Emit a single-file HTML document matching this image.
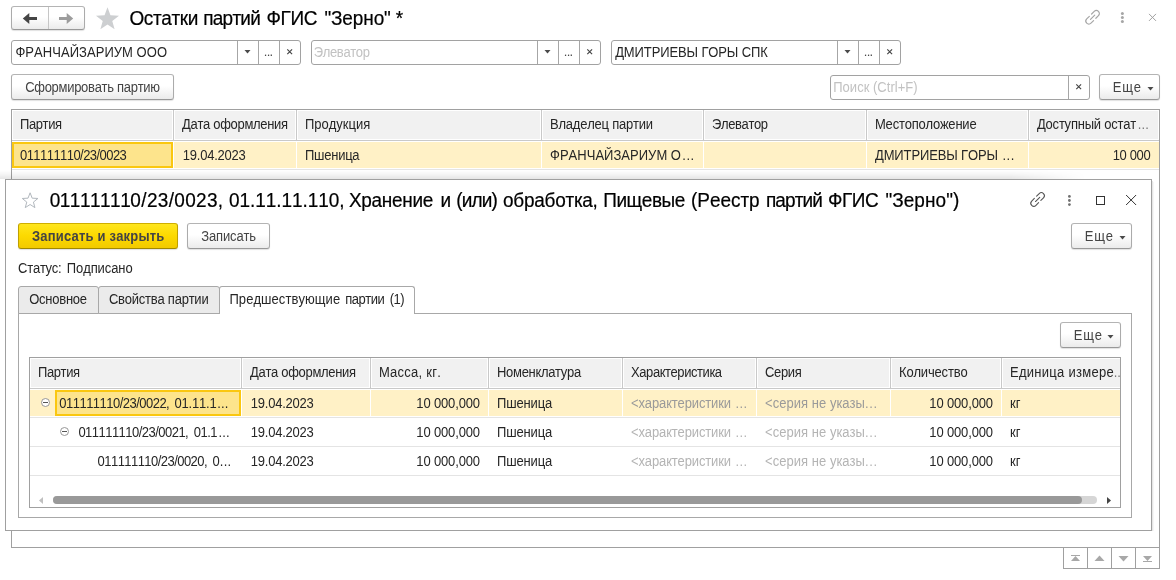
<!DOCTYPE html>
<html lang="ru">
<head>
<meta charset="utf-8">
<title>Остатки партий ФГИС "Зерно"</title>
<style>
*{box-sizing:border-box;margin:0;padding:0}
html,body{width:1176px;height:580px;overflow:hidden;background:#fff}
body{position:relative;font-family:"Liberation Sans",Arial,sans-serif;font-size:13px;color:#262626;line-height:15px;font-kerning:none}
.abs,.abs>*{position:absolute}
.abs{left:0;top:0;width:1176px;height:580px}
.t{white-space:nowrap;line-height:15px;height:15px}
.btn{border:1px solid #ababab;border-top-color:#b4b4b4;border-bottom-color:#989898;border-radius:3px;background:linear-gradient(#fff 0%,#fff 45%,#ebebeb 100%);box-shadow:0 1px 1px rgba(0,0,0,.12)}
.fld{border:1px solid #a2a2a2;border-radius:3px;background:#fff}
svg{overflow:visible}
</style>
</head>
<body>
<div class="abs" id="main">
<div class="btn" style="left:11px;top:6px;width:74px;height:24px;"></div>
<div style="left:48px;top:7px;width:1px;height:22px;background:#c6c6c6;"></div>
<svg style="left:11px;top:6px" width="74" height="24" viewBox="0 0 74 24"><path d="M11.8 12.5 L18.3 7 V11 H26 V14 H18.3 V18 Z" fill="#454545"/><path d="M62.2 12.5 L55.7 7 V11 H48 V14 H55.7 V18 Z" fill="#9c9c9c"/></svg>
<svg style="left:0;top:0" width="1" height="1"><path d="M107.50 7.30 L110.44 15.35 L119.01 15.66 L112.26 20.95 L114.61 29.19 L107.50 24.40 L100.39 29.19 L102.74 20.95 L95.99 15.66 L104.56 15.35 Z" fill="#cdcfd1"/></svg>
<div class="t" style="left:129.40px;top:8px;font-size:19px;line-height:22px;height:22px;-webkit-text-stroke:0.2px #000;letter-spacing:-0.385px;color:#000;transform:scaleY(1.03);transform-origin:0 17px;">Остатки</div>
<div class="t" style="left:203.18px;top:8px;font-size:19px;line-height:22px;height:22px;-webkit-text-stroke:0.2px #000;letter-spacing:-0.733px;color:#000;transform:scaleY(1.03);transform-origin:0 17px;">партий</div>
<div class="t" style="left:266.51px;top:8px;font-size:19px;line-height:22px;height:22px;-webkit-text-stroke:0.2px #000;letter-spacing:-0.381px;color:#000;transform:scaleY(1.03);transform-origin:0 17px;">ФГИС</div>
<div class="t" style="left:324.39px;top:8px;font-size:19px;line-height:22px;height:22px;-webkit-text-stroke:0.2px #000;letter-spacing:-0.116px;color:#000;transform:scaleY(1.03);transform-origin:0 17px;">"Зерно"</div>
<div class="t" style="left:395.69px;top:8px;font-size:19px;line-height:22px;height:22px;-webkit-text-stroke:0.2px #000;color:#000;transform:scaleY(1.03);transform-origin:0 17px;">*</div>
<svg style="left:0;top:0" width="1" height="1"><g transform="translate(1092.6 17.3) rotate(-45)" fill="none" stroke="#a6a6a6" stroke-width="1.2" stroke-linecap="round"><path d="M-1.6 -3 H-5.3 a3 3 0 0 0 0 6 H-1.6"/><path d="M1.6 -3 H5.3 a3 3 0 0 1 0 6 H1.6"/><path d="M-3 0 H3"/></g></svg>
<svg style="left:0;top:0" width="1" height="1" fill="#a6a6a6"><circle cx="1122.4" cy="13.6" r="1.5"/><circle cx="1122.4" cy="17.6" r="1.5"/><circle cx="1122.4" cy="21.6" r="1.5"/></svg>
<svg style="left:0;top:0" width="1" height="1"><path d="M1149 13.9 L1156 20.9 M1156 13.9 L1149 20.9" stroke="#a0a0a0" stroke-width="1" fill="none"/></svg>
<div class="fld" style="left:11px;top:40px;width:290px;height:25px;"></div>
<div style="left:279px;top:41px;width:1px;height:23px;background:#a6a6a6;"></div>
<div style="left:258px;top:41px;width:1px;height:23px;background:#a6a6a6;"></div>
<div style="left:237px;top:41px;width:1px;height:23px;background:#a6a6a6;"></div>
<div class="t" style="left:15.45px;top:45px;letter-spacing:0.047px;color:#262626;transform:scaleY(1.07);transform-origin:0 12px;">ФРАНЧАЙЗАРИУМ ООО</div>
<svg style="left:244px;top:49.5px" width="7" height="4" viewBox="0 0 7 4"><path d="M0.5 0 H6.5 L3.5 3.5 Z" fill="#4a4a4a"/></svg>
<div class="t" style="left:263.81px;top:44px;letter-spacing:-0.731px;color:#4a4a4a;transform:scaleY(1.001);transform-origin:0 12px;">...</div>
<svg style="left:286.8px;top:48.7px" width="5.4" height="5.4" viewBox="0 0 5.4 5.4"><path d="M0.3 0.3 L5.1 5.1 M5.1 0.3 L0.3 5.1" stroke="#444" stroke-width="1.15" fill="none"/></svg>
<div class="fld" style="left:311px;top:40px;width:290px;height:25px;"></div>
<div style="left:579px;top:41px;width:1px;height:23px;background:#a6a6a6;"></div>
<div style="left:558px;top:41px;width:1px;height:23px;background:#a6a6a6;"></div>
<div style="left:537px;top:41px;width:1px;height:23px;background:#a6a6a6;"></div>
<div class="t" style="left:313.83px;top:45px;letter-spacing:-0.378px;color:#c2c2c2;transform:scaleY(1.07);transform-origin:0 12px;">Элеватор</div>
<svg style="left:544px;top:49.5px" width="7" height="4" viewBox="0 0 7 4"><path d="M0.5 0 H6.5 L3.5 3.5 Z" fill="#4a4a4a"/></svg>
<div class="t" style="left:563.81px;top:44px;letter-spacing:-0.731px;color:#4a4a4a;transform:scaleY(1.001);transform-origin:0 12px;">...</div>
<svg style="left:586.8px;top:48.7px" width="5.4" height="5.4" viewBox="0 0 5.4 5.4"><path d="M0.3 0.3 L5.1 5.1 M5.1 0.3 L0.3 5.1" stroke="#444" stroke-width="1.15" fill="none"/></svg>
<div class="fld" style="left:611px;top:40px;width:290px;height:25px;"></div>
<div style="left:879px;top:41px;width:1px;height:23px;background:#a6a6a6;"></div>
<div style="left:858px;top:41px;width:1px;height:23px;background:#a6a6a6;"></div>
<div style="left:837px;top:41px;width:1px;height:23px;background:#a6a6a6;"></div>
<div class="t" style="left:615.20px;top:45px;letter-spacing:-0.119px;color:#262626;transform:scaleY(1.07);transform-origin:0 12px;">ДМИТРИЕВЫ ГОРЫ СПК</div>
<svg style="left:844px;top:49.5px" width="7" height="4" viewBox="0 0 7 4"><path d="M0.5 0 H6.5 L3.5 3.5 Z" fill="#4a4a4a"/></svg>
<div class="t" style="left:863.81px;top:44px;letter-spacing:-0.731px;color:#4a4a4a;transform:scaleY(1.001);transform-origin:0 12px;">...</div>
<svg style="left:886.8px;top:48.7px" width="5.4" height="5.4" viewBox="0 0 5.4 5.4"><path d="M0.3 0.3 L5.1 5.1 M5.1 0.3 L0.3 5.1" stroke="#444" stroke-width="1.15" fill="none"/></svg>
<div class="btn" style="left:11px;top:74px;width:163px;height:26px;"></div>
<div class="t" style="left:25.14px;top:80px;letter-spacing:-0.288px;color:#444;transform:scaleY(1.07);transform-origin:0 12px;">Сформировать партию</div>
<div class="fld" style="left:830px;top:75px;width:260px;height:25px;"></div>
<div style="left:1068px;top:76px;width:1px;height:23px;background:#a6a6a6;"></div>
<div class="t" style="left:833.25px;top:80px;letter-spacing:0.021px;color:#c2c2c2;transform:scaleY(1.07);transform-origin:0 12px;">Поиск (Ctrl+F)</div>
<svg style="left:1075.8px;top:83.8px" width="5.4" height="5.4" viewBox="0 0 5.4 5.4"><path d="M0.3 0.3 L5.1 5.1 M5.1 0.3 L0.3 5.1" stroke="#444" stroke-width="1.15" fill="none"/></svg>
<div class="btn" style="left:1099px;top:74px;width:61px;height:26px;"></div>
<div class="t" style="left:1112.63px;top:80px;letter-spacing:0.849px;color:#444;transform:scaleY(1.07);transform-origin:0 12px;">Еще</div>
<svg style="left:1146.5px;top:86.6px" width="7" height="4" viewBox="0 0 7 4"><path d="M0.5 0 H6.5 L3.5 3.5 Z" fill="#4a4a4a"/></svg>
<div style="left:11px;top:109px;width:1149px;height:439px;background:#fff;border:1px solid #a0a0a0;"></div>
<div style="left:13px;top:111px;width:159px;height:28px;background:#f1f1f1;"></div>
<div style="left:175px;top:111px;width:120px;height:28px;background:#f1f1f1;"></div>
<div style="left:298px;top:111px;width:242px;height:28px;background:#f1f1f1;"></div>
<div style="left:543px;top:111px;width:159px;height:28px;background:#f1f1f1;"></div>
<div style="left:705px;top:111px;width:160px;height:28px;background:#f1f1f1;"></div>
<div style="left:868px;top:111px;width:159px;height:28px;background:#f1f1f1;"></div>
<div style="left:1030px;top:111px;width:128px;height:28px;background:#f1f1f1;"></div>
<div style="left:173px;top:110px;width:1px;height:30px;background:#c9c9c9;"></div>
<div style="left:296px;top:110px;width:1px;height:30px;background:#c9c9c9;"></div>
<div style="left:541px;top:110px;width:1px;height:30px;background:#c9c9c9;"></div>
<div style="left:703px;top:110px;width:1px;height:30px;background:#c9c9c9;"></div>
<div style="left:866px;top:110px;width:1px;height:30px;background:#c9c9c9;"></div>
<div style="left:1028px;top:110px;width:1px;height:30px;background:#c9c9c9;"></div>
<div style="left:12px;top:140px;width:1147px;height:1px;background:#c9c9c9;"></div>
<div style="left:12px;top:141px;width:1147px;height:28px;background:#fff;"></div>
<div style="left:12px;top:142px;width:161px;height:26px;background:#fff1c6;"></div>
<div style="left:174px;top:142px;width:122px;height:26px;background:#fff1c6;"></div>
<div style="left:297px;top:142px;width:244px;height:26px;background:#fff1c6;"></div>
<div style="left:542px;top:142px;width:161px;height:26px;background:#fff1c6;"></div>
<div style="left:704px;top:142px;width:162px;height:26px;background:#fff1c6;"></div>
<div style="left:867px;top:142px;width:161px;height:26px;background:#fff1c6;"></div>
<div style="left:1029px;top:142px;width:130px;height:26px;background:#fff1c6;"></div>
<div style="left:12px;top:142px;width:161px;height:26px;background:#fde48c;border:2px solid #fac710;"></div>
<div style="left:12px;top:169px;width:1147px;height:1px;background:#e4e4e4;"></div>
<div class="t" style="left:20.00px;top:117px;letter-spacing:-0.402px;transform:scaleY(1.07);transform-origin:0 12px;">Партия</div>
<div class="t" style="left:182.00px;top:117px;letter-spacing:-0.314px;transform:scaleY(1.07);transform-origin:0 12px;">Дата оформления</div>
<div class="t" style="left:305.00px;top:117px;letter-spacing:-0.009px;transform:scaleY(1.07);transform-origin:0 12px;">Продукция</div>
<div class="t" style="left:550.00px;top:117px;letter-spacing:-0.221px;transform:scaleY(1.07);transform-origin:0 12px;">Владелец партии</div>
<div class="t" style="left:712.00px;top:117px;letter-spacing:-0.373px;transform:scaleY(1.07);transform-origin:0 12px;">Элеватор</div>
<div class="t" style="left:875.00px;top:117px;letter-spacing:-0.215px;transform:scaleY(1.07);transform-origin:0 12px;">Местоположение</div>
<div class="t" style="left:1037.00px;top:117px;letter-spacing:-0.216px;transform:scaleY(1.07);transform-origin:0 12px;">Доступный остат</div>
<div class="t" style="left:1137.81px;top:117px;letter-spacing:0.144px;color:#777;transform:scaleY(1.07);transform-origin:0 12px;">...</div>
<div class="t" style="left:20.00px;top:148px;letter-spacing:-0.553px;transform:scaleY(1.07);transform-origin:0 12px;">011111110/23/0023</div>
<div class="t" style="left:182.80px;top:148px;letter-spacing:-0.227px;transform:scaleY(1.07);transform-origin:0 12px;">19.04.2023</div>
<div class="t" style="left:305.00px;top:148px;letter-spacing:-0.262px;transform:scaleY(1.07);transform-origin:0 12px;">Пшеница</div>
<div class="t" style="left:550.00px;top:148px;letter-spacing:0.024px;transform:scaleY(1.07);transform-origin:0 12px;">ФРАНЧАЙЗАРИУМ О</div>
<div class="t" style="left:682.31px;top:148px;letter-spacing:0.544px;transform:scaleY(1.07);transform-origin:0 12px;">...</div>
<div class="t" style="left:875.00px;top:148px;letter-spacing:-0.131px;transform:scaleY(1.07);transform-origin:0 12px;">ДМИТРИЕВЫ ГОРЫ</div>
<div class="t" style="left:1002.41px;top:148px;letter-spacing:0.544px;transform:scaleY(1.07);transform-origin:0 12px;">...</div>
<div class="t" style="left:1112.71px;top:148px;letter-spacing:-0.363px;transform:scaleY(1.07);transform-origin:0 12px;">10 000</div>
<div style="left:1063px;top:548px;width:97px;height:21px;background:#fff;border:1px solid #a0a0a0;border-top:none;"></div>
<div style="left:1087px;top:548px;width:1px;height:20px;background:#a0a0a0;"></div>
<div style="left:1111px;top:548px;width:1px;height:20px;background:#a0a0a0;"></div>
<div style="left:1135px;top:548px;width:1px;height:20px;background:#a0a0a0;"></div>
<svg style="left:1063px;top:548px" width="97" height="21" viewBox="0 0 97 21" fill="#a8a8a8"><path d="M8 7 H17 V8 H8 Z M8 13 L12.5 8 L17 13 Z"/><path d="M31.5 13 L36.5 7.6 L41.5 13 Z"/><path d="M55.5 8 L60.5 13.5 L65.5 8 Z"/><path d="M80 8 L84.5 13 L89 8 Z M80 13 H89 V14 H80 Z"/></svg>
</div>
<div class="abs" id="modal">
<div style="left:0px;top:170px;width:1086px;height:9px;background:linear-gradient(to bottom,rgba(0,0,0,0) 0%,rgba(0,0,0,.03) 40%,rgba(0,0,0,.10) 100%);-webkit-mask-image:linear-gradient(to right,#000 0%,#000 93%,transparent 100%);mask-image:linear-gradient(to right,#000 0%,#000 93%,transparent 100%);"></div>
<div style="left:1152px;top:181px;width:1px;height:350px;background:#e6e6e6;"></div>
<div style="left:1153px;top:182px;width:1px;height:349px;background:#f6f6f6;"></div>
<div style="left:5px;top:179px;width:1147px;height:352px;background:#fff;border:1px solid #a0a0a0;"></div>
<svg style="left:0;top:0" width="1" height="1"><path d="M30.10 192.80 L32.16 198.17 L37.90 198.47 L33.43 202.08 L34.92 207.63 L30.10 204.50 L25.28 207.63 L26.77 202.08 L22.30 198.47 L28.04 198.17 Z" fill="none" stroke="#b2b8be" stroke-width="1"/></svg>
<div class="t" style="left:49.76px;top:190px;font-size:19px;line-height:22px;height:22px;-webkit-text-stroke:0.2px #000;letter-spacing:-0.508px;color:#000;transform:scaleY(1.03);transform-origin:0 17px;">011111110</div>
<div class="t" style="left:141.30px;top:190px;font-size:19px;line-height:22px;height:22px;-webkit-text-stroke:0.2px #000;letter-spacing:0.315px;color:#000;transform:scaleY(1.03);transform-origin:0 17px;">/23/0023,</div>
<div class="t" style="left:228.96px;top:190px;font-size:19px;line-height:22px;height:22px;-webkit-text-stroke:0.2px #000;letter-spacing:-0.060px;color:#000;transform:scaleY(1.03);transform-origin:0 17px;">01.11.11.110,</div>
<div class="t" style="left:348.97px;top:190px;font-size:19px;line-height:22px;height:22px;-webkit-text-stroke:0.2px #000;letter-spacing:-0.317px;color:#000;transform:scaleY(1.03);transform-origin:0 17px;">Хранение</div>
<div class="t" style="left:440.38px;top:190px;font-size:19px;line-height:22px;height:22px;-webkit-text-stroke:0.2px #000;color:#000;transform:scaleY(1.03);transform-origin:0 17px;">и</div>
<div class="t" style="left:456.22px;top:190px;font-size:19px;line-height:22px;height:22px;-webkit-text-stroke:0.2px #000;letter-spacing:-0.865px;color:#000;transform:scaleY(1.03);transform-origin:0 17px;">(или)</div>
<div class="t" style="left:502.90px;top:190px;font-size:19px;line-height:22px;height:22px;-webkit-text-stroke:0.2px #000;letter-spacing:-0.226px;color:#000;transform:scaleY(1.03);transform-origin:0 17px;">обработка,</div>
<div class="t" style="left:603.26px;top:190px;font-size:19px;line-height:22px;height:22px;-webkit-text-stroke:0.2px #000;letter-spacing:-0.459px;color:#000;transform:scaleY(1.03);transform-origin:0 17px;">Пищевые</div>
<div class="t" style="left:691.12px;top:190px;font-size:19px;line-height:22px;height:22px;-webkit-text-stroke:0.2px #000;letter-spacing:-0.063px;color:#000;transform:scaleY(1.03);transform-origin:0 17px;">(Реестр</div>
<div class="t" style="left:765.98px;top:190px;font-size:19px;line-height:22px;height:22px;-webkit-text-stroke:0.2px #000;letter-spacing:-0.913px;color:#000;transform:scaleY(1.03);transform-origin:0 17px;">партий</div>
<div class="t" style="left:828.11px;top:190px;font-size:19px;line-height:22px;height:22px;-webkit-text-stroke:0.2px #000;letter-spacing:-0.514px;color:#000;transform:scaleY(1.03);transform-origin:0 17px;">ФГИС</div>
<div class="t" style="left:885.39px;top:190px;font-size:19px;line-height:22px;height:22px;-webkit-text-stroke:0.2px #000;letter-spacing:0.064px;color:#000;transform:scaleY(1.03);transform-origin:0 17px;">"Зерно")</div>
<svg style="left:0;top:0" width="1" height="1"><g transform="translate(1037.6 199.4) rotate(-45)" fill="none" stroke="#555" stroke-width="1.1" stroke-linecap="round"><path d="M-1.6 -3 H-5.3 a3 3 0 0 0 0 6 H-1.6"/><path d="M1.6 -3 H5.3 a3 3 0 0 1 0 6 H1.6"/><path d="M-3 0 H3"/></g></svg>
<svg style="left:0;top:0" width="1" height="1" fill="#707070"><circle cx="1069.4" cy="196.4" r="1.4"/><circle cx="1069.4" cy="200.5" r="1.4"/><circle cx="1069.4" cy="204.6" r="1.4"/></svg>
<div style="left:1096px;top:196px;width:9px;height:9px;border:1px solid #333;"></div>
<svg style="left:0;top:0" width="1" height="1"><path d="M1126.1 195 L1136.1 205 M1136.1 195 L1126.1 205" stroke="#333" stroke-width="1" fill="none"/></svg>
<div style="left:18px;top:223px;width:160px;height:26px;border:1px solid #bfa000;border-top-color:#cfae00;border-bottom-color:#a08800;border-radius:3px;background:linear-gradient(#ffe61e 0%,#fcd900 50%,#f2ca00 100%);box-shadow:0 1px 1px rgba(0,0,0,.12);"></div>
<div class="t" style="left:32.01px;top:229px;letter-spacing:0.202px;font-weight:bold;color:#444;transform:scaleY(1.07);transform-origin:0 12px;">Записать и закрыть</div>
<div class="btn" style="left:187px;top:223px;width:83px;height:26px;"></div>
<div class="t" style="left:201.27px;top:229px;letter-spacing:-0.147px;color:#444;transform:scaleY(1.07);transform-origin:0 12px;">Записать</div>
<div class="btn" style="left:1071px;top:223px;width:61px;height:26px;"></div>
<div class="t" style="left:1084.63px;top:229px;letter-spacing:0.849px;color:#444;transform:scaleY(1.07);transform-origin:0 12px;">Еще</div>
<svg style="left:1118.5px;top:235.8px" width="7" height="4" viewBox="0 0 7 4"><path d="M0.5 0 H6.5 L3.5 3.5 Z" fill="#4a4a4a"/></svg>
<div class="t" style="left:18.04px;top:261px;letter-spacing:-0.240px;transform:scaleY(1.07);transform-origin:0 12px;">Статус:</div>
<div class="t" style="left:66.75px;top:261px;letter-spacing:-0.081px;transform:scaleY(1.07);transform-origin:0 12px;">Подписано</div>
<div style="left:18px;top:313px;width:1114px;height:205px;background:#fff;border:1px solid #a8a8a8;"></div>
<div style="left:18px;top:286px;width:81px;height:28px;background:#ebebeb;border:1px solid #a8a8a8;border-radius:3px 3px 0 0;"></div>
<div style="left:98px;top:286px;width:122px;height:28px;background:#ebebeb;border:1px solid #a8a8a8;border-radius:3px 3px 0 0;"></div>
<div style="left:219px;top:286px;width:196px;height:28px;background:#fff;border:1px solid #a8a8a8;border-bottom:none;border-radius:3px 3px 0 0;"></div>
<div class="t" style="left:29.28px;top:292px;letter-spacing:-0.260px;transform:scaleY(1.07);transform-origin:0 12px;">Основное</div>
<div class="t" style="left:108.94px;top:292px;letter-spacing:-0.232px;transform:scaleY(1.07);transform-origin:0 12px;">Свойства партии</div>
<div class="t" style="left:229.45px;top:292px;letter-spacing:0.064px;transform:scaleY(1.07);transform-origin:0 12px;">Предшествующие</div>
<div class="t" style="left:345.30px;top:292px;letter-spacing:-0.525px;transform:scaleY(1.07);transform-origin:0 12px;">партии</div>
<div class="t" style="left:389.69px;top:292px;letter-spacing:-0.513px;transform:scaleY(1.07);transform-origin:0 12px;">(1)</div>
<div class="btn" style="left:1060px;top:322px;width:61px;height:26px;"></div>
<div class="t" style="left:1073.63px;top:328px;letter-spacing:0.849px;color:#444;transform:scaleY(1.07);transform-origin:0 12px;">Еще</div>
<svg style="left:1107.3px;top:334.6px" width="7" height="4" viewBox="0 0 7 4"><path d="M0.5 0 H6.5 L3.5 3.5 Z" fill="#4a4a4a"/></svg>
<div style="left:29px;top:357px;width:1092px;height:151px;background:#fff;border:1px solid #a0a0a0;"></div>
<div style="left:31px;top:359px;width:209px;height:28px;background:#f1f1f1;"></div>
<div style="left:243px;top:359px;width:126px;height:28px;background:#f1f1f1;"></div>
<div style="left:372px;top:359px;width:115px;height:28px;background:#f1f1f1;"></div>
<div style="left:490px;top:359px;width:131px;height:28px;background:#f1f1f1;"></div>
<div style="left:624px;top:359px;width:131px;height:28px;background:#f1f1f1;"></div>
<div style="left:758px;top:359px;width:131px;height:28px;background:#f1f1f1;"></div>
<div style="left:892px;top:359px;width:108px;height:28px;background:#f1f1f1;"></div>
<div style="left:1003px;top:359px;width:117px;height:28px;background:#f1f1f1;"></div>
<div style="left:241px;top:358px;width:1px;height:30px;background:#c9c9c9;"></div>
<div style="left:370px;top:358px;width:1px;height:30px;background:#c9c9c9;"></div>
<div style="left:488px;top:358px;width:1px;height:30px;background:#c9c9c9;"></div>
<div style="left:622px;top:358px;width:1px;height:30px;background:#c9c9c9;"></div>
<div style="left:756px;top:358px;width:1px;height:30px;background:#c9c9c9;"></div>
<div style="left:890px;top:358px;width:1px;height:30px;background:#c9c9c9;"></div>
<div style="left:1001px;top:358px;width:1px;height:30px;background:#c9c9c9;"></div>
<div style="left:30px;top:388px;width:1090px;height:1px;background:#c9c9c9;"></div>
<div style="left:30px;top:389px;width:1090px;height:28px;background:#fff;"></div>
<div style="left:30px;top:390px;width:211px;height:26px;background:#fff1c6;"></div>
<div style="left:242px;top:390px;width:128px;height:26px;background:#fff1c6;"></div>
<div style="left:371px;top:390px;width:117px;height:26px;background:#fff1c6;"></div>
<div style="left:489px;top:390px;width:133px;height:26px;background:#fff1c6;"></div>
<div style="left:623px;top:390px;width:133px;height:26px;background:#fff1c6;"></div>
<div style="left:757px;top:390px;width:133px;height:26px;background:#fff1c6;"></div>
<div style="left:891px;top:390px;width:110px;height:26px;background:#fff1c6;"></div>
<div style="left:1002px;top:390px;width:118px;height:26px;background:#fff1c6;"></div>
<div style="left:55px;top:390px;width:186px;height:26px;background:#fde48c;border:2px solid #fac710;"></div>
<div style="left:30px;top:417px;width:1090px;height:1px;background:#e4e4e4;"></div>
<div style="left:30px;top:446px;width:1090px;height:1px;background:#e4e4e4;"></div>
<div style="left:30px;top:475px;width:1090px;height:1px;background:#e4e4e4;"></div>
<div class="t" style="left:38.00px;top:365px;letter-spacing:-0.402px;transform:scaleY(1.07);transform-origin:0 12px;">Партия</div>
<div class="t" style="left:250.00px;top:365px;letter-spacing:-0.314px;transform:scaleY(1.07);transform-origin:0 12px;">Дата оформления</div>
<div class="t" style="left:379.00px;top:365px;letter-spacing:0.243px;transform:scaleY(1.07);transform-origin:0 12px;">Масса, кг.</div>
<div class="t" style="left:497.00px;top:365px;letter-spacing:-0.294px;transform:scaleY(1.07);transform-origin:0 12px;">Номенклатура</div>
<div class="t" style="left:631.00px;top:365px;letter-spacing:-0.416px;transform:scaleY(1.07);transform-origin:0 12px;">Характеристика</div>
<div class="t" style="left:765.00px;top:365px;letter-spacing:-0.325px;transform:scaleY(1.07);transform-origin:0 12px;">Серия</div>
<div class="t" style="left:899.00px;top:365px;letter-spacing:-0.172px;transform:scaleY(1.07);transform-origin:0 12px;">Количество</div>
<div class="t" style="left:1010.00px;top:365px;letter-spacing:0.272px;transform:scaleY(1.07);transform-origin:0 12px;">Единица измере</div>
<div class="t" style="left:1113.81px;top:365px;letter-spacing:-0.206px;color:#777;transform:scaleY(1.07);transform-origin:0 12px;">...</div>
<div style="left:1120px;top:358px;width:1px;height:30px;background:#a0a0a0;"></div>
<div style="left:1121px;top:358px;width:10px;height:30px;background:#fff;"></div>
<div class="t" style="left:59.34px;top:396px;letter-spacing:-0.524px;transform:scaleY(1.07);transform-origin:0 12px;">011111110/23/0022,</div>
<div class="t" style="left:174.49px;top:396px;letter-spacing:-0.180px;transform:scaleY(1.07);transform-origin:0 12px;">01.11.1</div>
<div class="t" style="left:217.31px;top:396px;letter-spacing:0.094px;transform:scaleY(1.07);transform-origin:0 12px;">...</div>
<div class="t" style="left:250.80px;top:396px;letter-spacing:-0.227px;transform:scaleY(1.07);transform-origin:0 12px;">19.04.2023</div>
<div class="t" style="left:416.31px;top:396px;letter-spacing:-0.146px;transform:scaleY(1.07);transform-origin:0 12px;">10 000,000</div>
<div class="t" style="left:497.00px;top:396px;letter-spacing:-0.162px;transform:scaleY(1.07);transform-origin:0 12px;">Пшеница</div>
<div class="t" style="left:631.00px;top:396px;letter-spacing:-0.126px;color:#9a9a9a;transform:scaleY(1.07);transform-origin:0 12px;">&lt;характеристики</div>
<div class="t" style="left:735.51px;top:396px;letter-spacing:0.344px;color:#9a9a9a;transform:scaleY(1.07);transform-origin:0 12px;">...</div>
<div class="t" style="left:765.00px;top:396px;letter-spacing:0.053px;color:#9a9a9a;transform:scaleY(1.07);transform-origin:0 12px;">&lt;серия не указы</div>
<div class="t" style="left:865.01px;top:396px;letter-spacing:0.594px;color:#9a9a9a;transform:scaleY(1.07);transform-origin:0 12px;">...</div>
<div class="t" style="left:929.31px;top:396px;letter-spacing:-0.146px;transform:scaleY(1.07);transform-origin:0 12px;">10 000,000</div>
<div class="t" style="left:1010.00px;top:396px;transform:scaleY(1.07);transform-origin:0 12px;">кг</div>
<div class="t" style="left:78.39px;top:425px;letter-spacing:-0.527px;transform:scaleY(1.07);transform-origin:0 12px;">011111110/23/0021,</div>
<div class="t" style="left:193.79px;top:425px;letter-spacing:-0.536px;transform:scaleY(1.07);transform-origin:0 12px;">01.1</div>
<div class="t" style="left:218.41px;top:425px;letter-spacing:0.244px;transform:scaleY(1.07);transform-origin:0 12px;">...</div>
<div class="t" style="left:250.80px;top:425px;letter-spacing:-0.227px;transform:scaleY(1.07);transform-origin:0 12px;">19.04.2023</div>
<div class="t" style="left:416.31px;top:425px;letter-spacing:-0.146px;transform:scaleY(1.07);transform-origin:0 12px;">10 000,000</div>
<div class="t" style="left:497.00px;top:425px;letter-spacing:-0.162px;transform:scaleY(1.07);transform-origin:0 12px;">Пшеница</div>
<div class="t" style="left:631.00px;top:425px;letter-spacing:-0.126px;color:#b4b4b4;transform:scaleY(1.07);transform-origin:0 12px;">&lt;характеристики</div>
<div class="t" style="left:735.51px;top:425px;letter-spacing:0.344px;color:#b4b4b4;transform:scaleY(1.07);transform-origin:0 12px;">...</div>
<div class="t" style="left:765.00px;top:425px;letter-spacing:0.053px;color:#b4b4b4;transform:scaleY(1.07);transform-origin:0 12px;">&lt;серия не указы</div>
<div class="t" style="left:865.01px;top:425px;letter-spacing:0.594px;color:#b4b4b4;transform:scaleY(1.07);transform-origin:0 12px;">...</div>
<div class="t" style="left:929.31px;top:425px;letter-spacing:-0.146px;transform:scaleY(1.07);transform-origin:0 12px;">10 000,000</div>
<div class="t" style="left:1010.00px;top:425px;transform:scaleY(1.07);transform-origin:0 12px;">кг</div>
<div class="t" style="left:97.59px;top:454px;letter-spacing:-0.545px;transform:scaleY(1.07);transform-origin:0 12px;">011111110/23/0020,</div>
<div class="t" style="left:212.49px;top:454px;transform:scaleY(1.07);transform-origin:0 12px;">0</div>
<div class="t" style="left:219.81px;top:454px;letter-spacing:0.244px;transform:scaleY(1.07);transform-origin:0 12px;">...</div>
<div class="t" style="left:250.80px;top:454px;letter-spacing:-0.227px;transform:scaleY(1.07);transform-origin:0 12px;">19.04.2023</div>
<div class="t" style="left:416.31px;top:454px;letter-spacing:-0.146px;transform:scaleY(1.07);transform-origin:0 12px;">10 000,000</div>
<div class="t" style="left:497.00px;top:454px;letter-spacing:-0.162px;transform:scaleY(1.07);transform-origin:0 12px;">Пшеница</div>
<div class="t" style="left:631.00px;top:454px;letter-spacing:-0.126px;color:#b4b4b4;transform:scaleY(1.07);transform-origin:0 12px;">&lt;характеристики</div>
<div class="t" style="left:735.51px;top:454px;letter-spacing:0.344px;color:#b4b4b4;transform:scaleY(1.07);transform-origin:0 12px;">...</div>
<div class="t" style="left:765.00px;top:454px;letter-spacing:0.053px;color:#b4b4b4;transform:scaleY(1.07);transform-origin:0 12px;">&lt;серия не указы</div>
<div class="t" style="left:865.01px;top:454px;letter-spacing:0.594px;color:#b4b4b4;transform:scaleY(1.07);transform-origin:0 12px;">...</div>
<div class="t" style="left:929.31px;top:454px;letter-spacing:-0.146px;transform:scaleY(1.07);transform-origin:0 12px;">10 000,000</div>
<div class="t" style="left:1010.00px;top:454px;transform:scaleY(1.07);transform-origin:0 12px;">кг</div>
<svg style="left:40px;top:397px" width="10" height="10" viewBox="0 0 10 10"><circle cx="5.5" cy="5.5" r="4" fill="#fff" stroke="#8c8c8c" stroke-width="0.9"/><path d="M3 5.5 H8" stroke="#555" stroke-width="1"/></svg>
<svg style="left:59px;top:426px" width="10" height="10" viewBox="0 0 10 10"><circle cx="5.5" cy="5.5" r="4" fill="#fff" stroke="#8c8c8c" stroke-width="0.9"/><path d="M3 5.5 H8" stroke="#555" stroke-width="1"/></svg>
<div style="left:53px;top:496px;width:1044px;height:8px;background:#d6d6d6;border-radius:4px;"></div>
<div style="left:53px;top:496px;width:1029px;height:8px;background:#999;border-radius:4px;"></div>
<svg style="left:39px;top:496.5px" width="4" height="7" viewBox="0 0 4 7"><path d="M4 0 V7 L0 3.5 Z" fill="#c0c0c0"/></svg>
<svg style="left:1107px;top:496.5px" width="4" height="7" viewBox="0 0 4 7"><path d="M0 0 V7 L4 3.5 Z" fill="#444"/></svg>
</div>
</body>
</html>
